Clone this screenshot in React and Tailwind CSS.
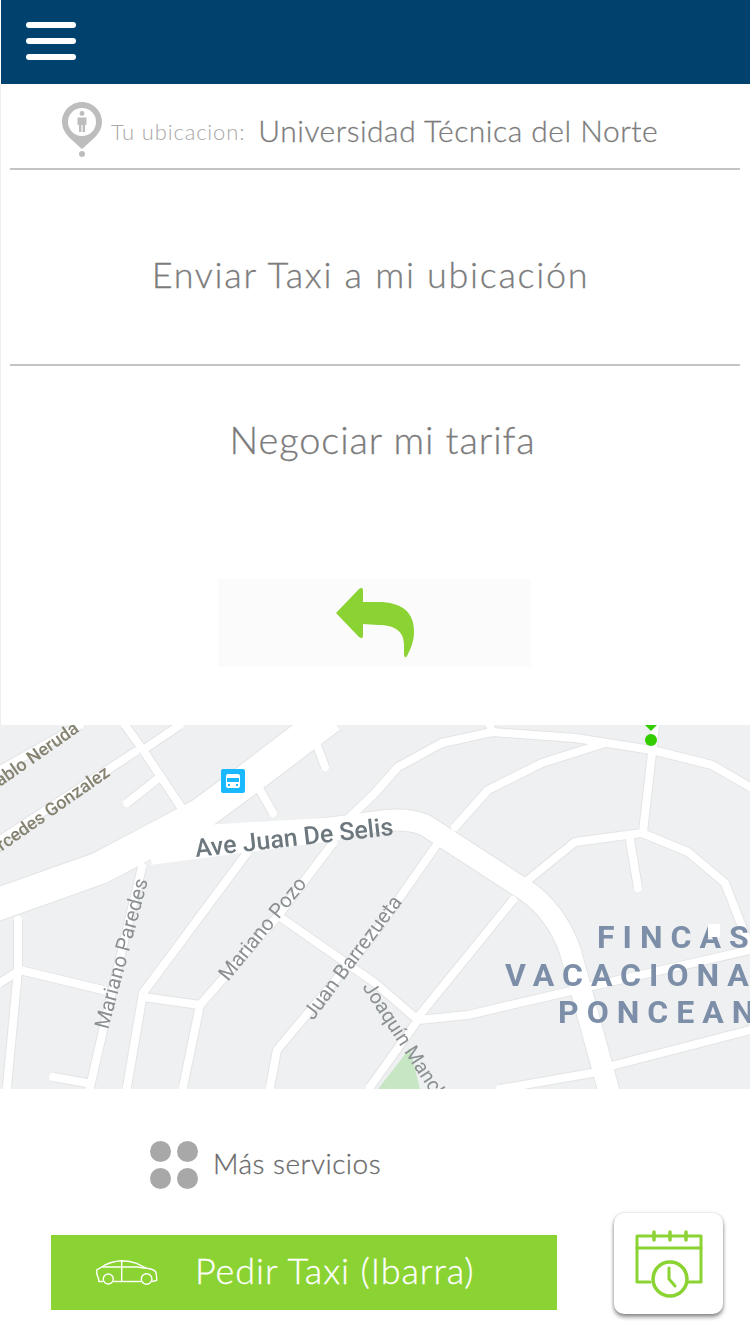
import React from 'react';

const FONT = { fontFamily: 'Lato, sans-serif' };

// roads: points are page x / y - 725
const bigRoads = [
  { w: 32, d: 'M-10 182 L100 143 L200 90 L250 53 L330 -8' },
  { w: 21, d: 'M150 128 L375 97 Q405 92 425 100 L525 165 Q555 185 570 225 L610 370' },
];

const smallRoads = [
  'M125 0 L143 25 L185 88',
  'M143 25 L180 0',
  'M135 27 L0 115',
  'M0 45 L80 0',
  'M160 52 L127 78',
  'M317 20 L325 42',
  'M257 60 L273 88',
  'M247 128 L143 268 L127 362',
  'M143 272 L200 280 L183 362',
  'M200 280 L277 192 L333 118',
  'M438 118 L375 208 L277 325 L270 362',
  'M280 192 L375 258 L418 295 L370 362',
  'M142 142 L113 262 L90 362',
  'M18 195 L18 245 L7 362',
  'M0 258 L20 245 L103 265',
  'M53 352 L87 358',
  'M350 92 L375 68 L398 42 L442 18 L492 7 L575 13 L652 25 L712 40 L750 62',
  'M455 102 L488 65 L542 38 L605 18',
  'M490 0 L492 7',
  'M655 0 L652 28 L643 107',
  'M528 155 L575 117 L642 108 L688 127 L725 158 L750 222',
  'M630 115 L638 163',
  'M513 175 L418 292',
  'M418 295 L468 290 L575 265 L750 225',
  'M750 305 L615 340',
  'M592 348 L500 364',
];

const labels = [
  { t: 'Ave Juan De Selis', x: 196, y: 132, r: -6.4, s: 25, c: '#6d787e', w: 500 },
  { t: 'Mariano Paredes', x: 108, y: 305, r: -75, s: 20.5, c: '#8b9093', w: 400 },
  { t: 'Mariano Pozo', x: 228, y: 257, r: -51, s: 20.5, c: '#8b9093', w: 400 },
  { t: 'Juan Barrezueta', x: 313, y: 296, r: -53, s: 20.5, c: '#8b9093', w: 400 },
  { t: 'Joaquín Mancheno', x: 362, y: 262, r: 57, s: 20, c: '#8b9093', w: 400 },
];

const Map = () => (
  <svg width="750" height="364" viewBox="0 0 750 364" className="block bg-[#eef0f1] blur-[0.5px]">
    <polygon points="378,364 410,323 420,364" fill="#c6e6c4" />
    {smallRoads.map((d, i) => (
      <path key={`e${i}`} d={d} fill="none" stroke="#e3e4e5" strokeWidth="10" strokeLinejoin="round" />
    ))}
    {bigRoads.map((r, i) => (
      <path key={`b${i}`} d={r.d} fill="none" stroke="#e3e4e5" strokeWidth={r.w + 2} strokeLinejoin="round" />
    ))}
    {smallRoads.map((d, i) => (
      <path key={`r${i}`} d={d} fill="none" stroke="#ffffff" strokeWidth="8" strokeLinejoin="round" strokeLinecap="round" />
    ))}
    {bigRoads.map((r, i) => (
      <path key={`w${i}`} d={r.d} fill="none" stroke="#ffffff" strokeWidth={r.w} strokeLinejoin="round" />
    ))}
    {/* union de la avenida con la via principal */}
    <polygon points="150,140 205,100 340,92 340,115" fill="#ffffff" />

    <g style={{ fontFamily: 'Roboto, sans-serif' }}>
      {labels.map((l) => (
        <text key={l.t} x={l.x} y={l.y} fontSize={l.s} fontWeight={l.w} fill={l.c} transform={`rotate(${l.r} ${l.x} ${l.y})`}>
          {l.t}
        </text>
      ))}
      <text x="80" y="6" fontSize="18" fontWeight="500" fill="#85826f" textAnchor="end" transform="rotate(-35 80 6)">Pablo Neruda</text>
      <text x="111" y="50" fontSize="18" fontWeight="500" fill="#85826f" textAnchor="end" transform="rotate(-35 111 50)">Mercedes Gonzalez</text>
      <g fontSize="32" fontWeight="700" fill="#7d8ea8">
        <text x="597" y="223" letterSpacing="8">FINCAS</text>
        <text x="505" y="261" letterSpacing="8">VACACIONALES</text>
        <text x="558" y="298" letterSpacing="8">PONCEANAS</text>
      </g>
    </g>
    <rect x="708" y="199" width="12" height="13" fill="#ffffff" />

    {/* parada de bus */}
    <rect x="221" y="44" width="24" height="24" rx="2" fill="#1ab9ff" />
    <rect x="226" y="49" width="14" height="14" rx="2" fill="#ffffff" />
    <rect x="227" y="53" width="12" height="4" fill="#1ab9ff" />
    <rect x="228" y="59" width="2" height="2" fill="#1ab9ff" />
    <rect x="236" y="59" width="2" height="2" fill="#1ab9ff" />

    <circle cx="651" cy="15" r="6" fill="#33cc00" />
    <polygon points="645,0 657,0 651,6" fill="#33cc00" />
  </svg>
);

const PinIcon = () => (
  <svg width="40" height="56" viewBox="0 0 40 56" className="block">
    <path d="M20 0 C9 0 0 9 0 20 C0 31 9 37 20 47 C31 37 40 31 40 20 C40 9 31 0 20 0 Z" fill="#bdbdbd" />
    <circle cx="20" cy="20" r="14" fill="#ffffff" />
    <circle cx="20" cy="52" r="3" fill="#bdbdbd" />
    <circle cx="20" cy="11.5" r="2.4" fill="#bdbdbd" />
    <path d="M15.5 15.5 H24.5 V23 H23 V30 H20.6 V23 H19.4 V30 H17 V23 H15.5 Z" fill="#bdbdbd" />
  </svg>
);

const BackArrow = () => (
  <svg width="78" height="70" viewBox="336 588 78 70" className="block">
    <path
      d="M336 613 L359 589 Q363 586 363 591 L363 602 L378 602 C402 602 414 612 414 632 C414 642 410 650 407 656 Q405 659 404 655 L404 645 C404 632 396 625 378 625 L363 624 L363 635 Q363 640 359 637 Z"
      fill="#8bd332"
    />
  </svg>
);

const CarIcon = () => (
  <svg width="62" height="26" viewBox="0 0 62 26" fill="none" stroke="#ffffff" strokeWidth="1.4" className="block">
    <path d="M7 21.5 H3 L2.3 18 L0.8 14 L0.8 10 L9 5 Q17 1 25.7 0.7 Q34 0.7 40.6 3.3 L50.6 8.3 Q57 9 59.5 11.6 Q61 15 60.6 20.5 L56 21.5" />
    <path d="M17.5 21.5 H45" />
    <circle cx="12.3" cy="19" r="5" />
    <circle cx="50.6" cy="19" r="5.3" />
    <path d="M6 7 H41 L50 8.3 M25.7 1 V21" />
  </svg>
);

const CalendarIcon = () => (
  <svg width="68" height="68" viewBox="0 0 68 68" fill="none" stroke="#8bd332" strokeLinecap="round" className="block">
    <path d="M15 52 H2 V6 H66 V52 H53" strokeWidth="3" strokeLinejoin="round" />
    <path d="M2 18 H66" strokeWidth="3" />
    <path d="M19 2 V10 M35 2 V10 M51 2 V10" strokeWidth="3.5" />
    <circle cx="35" cy="49" r="17" fill="#ffffff" strokeWidth="3.5" />
    <path d="M34 38 V49 L40 56" strokeWidth="3" />
  </svg>
);

const Divider = () => <div className="ml-[9px] mr-[10px] h-[2px] bg-[#c4c4c4]" />;

const App = () => {
  return (
    <div className="w-[750px] h-[1334px] flex flex-col bg-white overflow-hidden" style={FONT}>
      {/* Barra superior */}
      <header className="ml-px h-[84px] shrink-0 bg-[#00416e] flex flex-col gap-[10px] pl-[25px] pt-[22px]">
        <span className="block w-[50px] h-[6px] rounded-full bg-white" />
        <span className="block w-[50px] h-[6px] rounded-full bg-white" />
        <span className="block w-[50px] h-[6px] rounded-full bg-white" />
      </header>

      {/* Panel de ubicacion */}
      <section className="h-[641px] shrink-0 border-l border-[#eeeeee] flex flex-col">
        <div className="h-[84px] flex items-end pl-[61px] pb-[10px]">
          <PinIcon />
          <span className="ml-[9px] mb-[13px] text-[22px] leading-[26px] font-light text-[#a8a8a8] tracking-[0.85px]">Tu ubicacion:</span>
          <span className="ml-[13px] mb-[10px] text-[30px] leading-[36px] font-light [-webkit-text-stroke:0.3px] text-[#7c7c7c] tracking-[0.5px]">Universidad Técnica del Norte</span>
        </div>
        <Divider />
        <div className="h-[194px] flex items-center justify-center pr-[10px] pt-[14px]">
          <span className="text-[36px] leading-[44px] font-light [-webkit-text-stroke:0.3px] text-[#7c7c7c] tracking-[1.7px]">Enviar Taxi a mi ubicación</span>
        </div>
        <Divider />
        <div className="h-[150px] flex items-center justify-center pl-[14px]">
          <span className="text-[38px] leading-[44px] font-light [-webkit-text-stroke:0.3px] text-[#7c7c7c] tracking-[0.9px] -mt-[4px]">Negociar mi tarifa</span>
        </div>
        <div className="ml-[217px] mt-[63px] w-[313px] h-[88px] bg-[#fbfbfb] flex items-center justify-center">
          <BackArrow />
        </div>
      </section>

      <Map />

      {/* Pie */}
      <footer className="flex-1 flex flex-col">
        <div className="mt-[52px] ml-[150px] flex items-center">
          <div className="grid grid-cols-2 gap-x-[6px] gap-y-[6px] w-[48px]">
            <span className="w-[21px] h-[21px] rounded-full bg-[#a8a8a8]" />
            <span className="w-[21px] h-[21px] rounded-full bg-[#a8a8a8]" />
            <span className="w-[21px] h-[21px] rounded-full bg-[#a8a8a8]" />
            <span className="w-[21px] h-[21px] rounded-full bg-[#a8a8a8]" />
          </div>
          <span className="ml-[15px] -mt-[4px] text-[28px] leading-[34px] font-light [-webkit-text-stroke:0.3px] text-[#6a6a6a] tracking-[0.5px]">Más servicios</span>
        </div>
        <div className="mt-[24px] flex items-start">
          <button className="ml-[51px] mt-[22px] w-[506px] h-[75px] bg-[#8bd332] flex items-center pl-[45px] text-white">
            <CarIcon />
            <span className="ml-[37px] -mt-[6px] text-[36px] leading-[44px] font-light [-webkit-text-stroke:0.3px] tracking-[0.9px]">Pedir Taxi (Ibarra)</span>
          </button>
          <div className="ml-[57px] w-[109px] h-[101px] rounded-[10px] bg-white shadow-[0_3px_4px_rgba(0,0,0,0.45),0_0_3px_rgba(0,0,0,0.15)] flex items-center justify-center">
            <CalendarIcon />
          </div>
        </div>
      </footer>
    </div>
  );
};

export default App;
